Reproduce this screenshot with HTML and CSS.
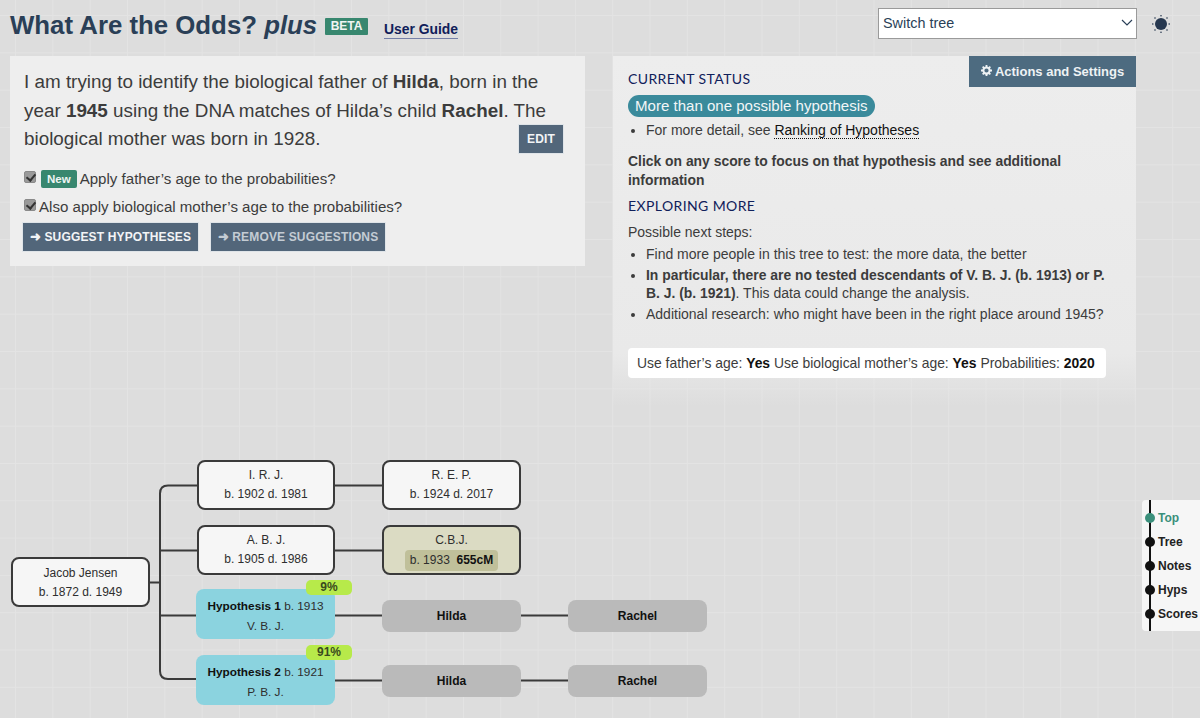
FILE: index.html
```html
<!DOCTYPE html>
<html lang="en">
<head>
<meta charset="utf-8">
<title>What Are the Odds? plus</title>
<link rel="stylesheet" href="styles.css">
</head>
<body>
<header class="topbar">
  <h1 class="title">What Are the Odds? <em>plus</em></h1>
  <span class="beta">BETA</span>
  <a class="guide" href="#">User Guide</a>
  <div class="switch">
    <span>Switch tree</span>
    <svg class="chev" width="12" height="7" viewBox="0 0 12 7"><path d="M1 1l5 5 5-5" fill="none" stroke="#2a3f57" stroke-width="1.2"/></svg>
  </div>
  <svg class="sun" width="18" height="18" viewBox="0 0 18 18">
    <circle cx="9" cy="9" r="6" fill="#26374f"/>
    <g fill="#26374f"><circle cx="9" cy=".8" r=".8"/><circle cx="9" cy="17.200" r=".8"/><circle cx=".8" cy="9" r=".8"/><circle cx="17.200" cy="9" r=".8"/><circle cx="3" cy="3" r=".8"/><circle cx="15" cy="3" r=".8"/><circle cx="3" cy="15" r=".8"/><circle cx="15" cy="15" r=".8"/></g>
  </svg>
</header>

<main class="panels">
  <section class="question">
    <div class="statement">
      <p>I am trying to identify the biological father of <b>Hilda</b>, born in the year <b>1945</b> using the DNA matches of Hilda’s child <b>Rachel</b>. The biological mother was born in 1928.</p>
      <button class="btn edit">EDIT</button>
    </div>
    <label class="check first"><input type="checkbox" checked><span class="new">New</span> Apply father’s age to the probabilities?</label>
    <label class="check"><input type="checkbox" checked>Also apply biological mother’s age to the probabilities?</label>
    <div class="actions">
      <button class="btn"><span class="arrow">➜</span> SUGGEST HYPOTHESES</button>
      <button class="btn muted"><span class="arrow">➜</span> REMOVE SUGGESTIONS</button>
    </div>
  </section>

  <section class="status">
    <button class="settings"><svg width="11" height="11" viewBox="0 0 12 12"><circle cx="6" cy="6" r="3.4" fill="none" stroke="#eef2f4" stroke-width="2.2"/><g stroke="#eef2f4" stroke-width="2"><path d="M6 0v2.400M6 9.600V12M0 6h2.400M9.600 6H12M1.800 1.800l1.700 1.700M8.500 8.500l1.700 1.700M1.800 10.200l1.700-1.700M8.500 3.500l1.700-1.700"/></g></svg> Actions and Settings</button>
    <h2>CURRENT STATUS</h2>
    <div class="pill">More than one possible hypothesis</div>
    <ul class="detail"><li>For more detail, see <a href="#">Ranking of Hypotheses</a></li></ul>
    <p class="focus">Click on any score to focus on that hypothesis and see additional information</p>
    <h2 class="explore">EXPLORING MORE</h2>
    <p class="next">Possible next steps:</p>
    <ul class="steps">
      <li>Find more people in this tree to test: the more data, the better</li>
      <li><b>In particular, there are no tested descendants of V. B. J. (b. 1913) or P. B. J. (b. 1921)</b>. This data could change the analysis.</li>
      <li>Additional research: who might have been in the right place around 1945?</li>
    </ul>
    <div class="summary">Use father’s age: <b>Yes</b> Use biological mother’s age: <b>Yes</b> Probabilities: <b>2020</b></div>
  </section>
</main>

<section class="tree">
  <svg class="links" width="1200" height="268" viewBox="0 450 1200 268">
    <path d="M149 582.500H160M197 485.500H168q-8 0-8 8V671q0 8 8 8H197M160 550.500H197M160 615.500H197M335 485.500H382M335 550.500H382M335 615.500H382M335 680.500H382M521 615.500H568M521 680.500H568" fill="none" stroke="#3a3a3a" stroke-width="2"/>
  </svg>
  <div class="node person n-root">Jacob Jensen<br>b. 1872 d. 1949</div>
  <div class="node person n-irj">I. R. J.<br>b. 1902 d. 1981</div>
  <div class="node person n-rep">R. E. P.<br>b. 1924 d. 2017</div>
  <div class="node person n-abj">A. B. J.<br>b. 1905 d. 1986</div>
  <div class="node match n-cbj">C.B.J.<br><span class="cm">b. 1933 &nbsp;<b>655cM</b></span></div>
  <div class="node hyp n-h1"><b>Hypothesis 1</b> b. 1913<br>V. B. J.</div>
  <div class="node hyp n-h2"><b>Hypothesis 2</b> b. 1921<br>P. B. J.</div>
  <div class="score s-h1">9%</div>
  <div class="score s-h2">91%</div>
  <div class="node gray n-hilda1">Hilda</div>
  <div class="node gray n-rachel1">Rachel</div>
  <div class="node gray n-hilda2">Hilda</div>
  <div class="node gray n-rachel2">Rachel</div>
</section>

<nav class="jump">
  <a class="active" href="#"><i></i>Top</a>
  <a href="#"><i></i>Tree</a>
  <a href="#"><i></i>Notes</a>
  <a href="#"><i></i>Hyps</a>
  <a href="#"><i></i>Scores</a>
</nav>
</body>
</html>
```
FILE: styles.css
```css
* { box-sizing: border-box; }
html, body { height: 100%; }
body {
  margin: 0;
  overflow: hidden;
  position: relative;
  font-family: "Liberation Sans", Arial, sans-serif;
  color: #3a3a3a;
  background-color: #dddddd;
  background-image:
    linear-gradient(#e3e3e3 1px, transparent 1px),
    linear-gradient(90deg, #e3e3e3 1px, transparent 1px);
  background-size: 37.33px 37.33px;
  background-position: 15px 15px;
}
.topbar {
  display: flex;
  align-items: flex-start;
  height: 56px;
  padding: 8px 0 0 10px;
}
.title {
  margin: 0;
  font-size: 25.800px;
  line-height: 34px;
  font-weight: 700;
  color: #2a3f57;
}
.beta {
  margin: 10px 0 0 8px;
  padding: 0 5.500px;
  height: 17px;
  line-height: 17px;
  font-size: 12px;
  font-weight: 700;
  color: #f0f5f3;
  background: #38876f;
  border-radius: 1px;
}
.guide {
  margin: 13px 0 0 16px;
  font-size: 13.900px;
  line-height: 17px;
  font-weight: 700;
  color: #10205a;
  text-decoration: none;
  border-bottom: 1px solid #7580a8;
}
.switch {
  margin: 0 0 0 auto;
  width: 259px;
  height: 31px;
  display: flex;
  align-items: center;
  justify-content: space-between;
  padding: 0 3px 2px 4px;
  background: #fff;
  border: 1px solid #9a9a9a;
  font-size: 14.400px;
  color: #2a3f57;
}
.sun { margin: 7px 30px 0 15px; }

.panels {
  display: flex;
  align-items: flex-start;
  gap: 28px;
  padding-left: 10px;
}
.question {
  width: 575px;
  height: 210px;
  padding: 12px 21px 0 14px;
  background: #eeeeee;
}
.statement { position: relative; }
.statement p {
  margin: 0;
  font-size: 18.850px;
  line-height: 28.500px;
  color: #3c3c3c;
}
.btn {
  height: 29px;
  padding: 0;
  border: 1px solid #dfe4e8;
  border-radius: 0;
  background: #52667a;
  color: #f2f4f6;
  font: 700 12px "Liberation Sans", Arial, sans-serif;
  letter-spacing: .15px;
  white-space: nowrap;
}
.edit {
  position: absolute;
  right: 0;
  bottom: 0;
  width: 46px;
  height: 30px;
}
.check {
  display: flex;
  align-items: center;
  font-size: 15.080px;
  line-height: 20px;
  color: #3c3c3c;
  margin-top: 8px;
}
.check.first { margin-top: 15px; }
.check input {
  appearance: none;
  position: relative;
  flex: none;
  width: 12px;
  height: 12px;
  margin: 0 3px 3px 0;
  background: #9a9a9a;
  border: 1px solid #8a8a8a;
  border-radius: 2px;
}
.check input::after {
  content: "";
  position: absolute;
  left: 3px;
  top: 0;
  width: 4px;
  height: 7px;
  border: solid #333;
  border-width: 0 2px 2px 0;
  transform: rotate(40deg);
}
.new {
  margin: 0 3px 0 2px;
  padding: 0 6px;
  height: 18px;
  line-height: 18px;
  font-size: 11.500px;
  font-weight: 700;
  color: #f0f5f3;
  background: #38876f;
  border-radius: 2px;
}
.actions {
  display: flex;
  gap: 11px;
  margin: 5px 0 0 -2px;
}
.actions .btn {
  width: 177px;
  height: 30px;
}
.actions .muted {
  width: 176px;
  color: #c4ccd4;
}
.arrow { font-size: 13px; line-height: 1; }

.status {
  position: relative;
  width: 523px;
  height: 350px;
  padding: 15px 15px 0;
  background: linear-gradient(#ededed 0, #e9e9e9 85%, rgba(233, 233, 233, 0) 100%);
  font-size: 14px;
  color: #3c3c3c;
}
.status b, .focus { font-size: 13.900px; }
.settings {
  position: absolute;
  top: 0;
  right: 0;
  width: 167px;
  height: 31px;
  padding: 0;
  border: 0;
  background: #4d6b80;
  color: #eef2f4;
  font: 700 13px "Liberation Sans", Arial, sans-serif;
}
.status h2 {
  margin: 0;
  font: 400 14px/16px "Lato", "Liberation Sans", sans-serif;
  letter-spacing: .4px;
  color: #10205a;
}
.pill {
  display: block;
  width: fit-content;
  margin-top: 8px;
  height: 22px;
  padding: 0 7px;
  line-height: 22px;
  font-size: 15.050px;
  color: #f2f6f7;
  background: #3a8a9b;
  border-radius: 11px;
}
.status ul { margin: 0; padding: 0 0 0 18px; }
.status .detail { margin-top: 3px; line-height: 20px; }
.detail a {
  color: #111;
  text-decoration: none;
  border-bottom: 1px dotted #111;
}
.focus {
  margin: 12px 0 0;
  font-weight: 700;
  line-height: 19px;
}
.status .explore { margin-top: 8px; }
.next { margin: 8px 0 0; line-height: 20px; }
.status .steps { margin-top: 3px; line-height: 18px; }
.steps li + li { margin-top: 3px; }
.summary {
  width: fit-content;
  margin-top: 25px;
  height: 30px;
  padding: 0 11px 0 9px;
  line-height: 30px;
  font-size: 13.900px;
  background: #fff;
  border-radius: 4px;
  color: #3c3c3c;
}
.summary b { color: #111; }

.tree {
  position: absolute;
  left: 0;
  top: 450px;
  width: 1200px;
  height: 268px;
}
.links { position: absolute; left: 0; top: 0; }
.node {
  position: absolute;
  text-align: center;
  font-size: 12px;
  line-height: 18.500px;
  color: #2e2e2e;
}
.person, .match {
  width: 139px;
  height: 50px;
  padding-top: 4px;
  border: 2px solid #3a3a3a;
  border-radius: 8px;
  background: #f6f6f6;
}
.match { background: #dbdbc3; }
.cm {
  display: inline-block;
  height: 21px;
  line-height: 21px;
  padding: 0 5px;
  background: #c0c09a;
  border-radius: 4px;
}
.cm b { color: #111; }
.hyp {
  width: 139px;
  height: 50px;
  padding-top: 7px;
  background: #8bd3df;
  border-radius: 8px;
  line-height: 20px;
  font-size: 11.800px;
}
.hyp b { color: #111; }
.gray {
  width: 139px;
  height: 32px;
  line-height: 32px;
  background: #bababa;
  border-radius: 8px;
  font-weight: 700;
  color: #111;
}
.n-root { left: 11px; top: 107px; padding-top: 5px; }
.n-irj { left: 197px; top: 10px; width: 138px; }
.n-rep { left: 382px; top: 10px; }
.n-abj { left: 197px; top: 75px; width: 138px; }
.n-cbj { left: 382px; top: 75px; }
.n-h1 { left: 196px; top: 139px; }
.n-h2 { left: 196px; top: 205px; }
.n-hilda1 { left: 382px; top: 150px; }
.n-rachel1 { left: 568px; top: 150px; }
.n-hilda2 { left: 382px; top: 215px; }
.n-rachel2 { left: 568px; top: 215px; }
.score {
  position: absolute;
  left: 306px;
  width: 46px;
  height: 15px;
  line-height: 15px;
  text-align: center;
  font-size: 12px;
  font-weight: 700;
  color: #3a4a20;
  background: #b7ea4a;
  border-radius: 5px;
}
.s-h1 { top: 130px; }
.s-h2 { top: 195px; }

.jump {
  position: fixed;
  left: 1142px;
  top: 500px;
  width: 58px;
  height: 131px;
  padding-top: 6px;
  display: flex;
  flex-direction: column;
  background: #f6f6f6;
  border-radius: 4px 0 0 4px;
}
.jump::before {
  content: "";
  position: absolute;
  left: 7px;
  top: 0;
  bottom: 0;
  width: 2px;
  background: #111;
}
.jump a {
  display: flex;
  align-items: center;
  height: 24px;
  padding-left: 3px;
  font-size: 12px;
  font-weight: 700;
  color: #222;
  text-decoration: none;
  white-space: nowrap;
  position: relative;
}
.jump i {
  width: 10px;
  height: 10px;
  margin-right: 3px;
  border-radius: 50%;
  background: #111;
}
.jump .active { color: #3a8f7b; }
.jump .active i { background: #3a8f7b; }
```
